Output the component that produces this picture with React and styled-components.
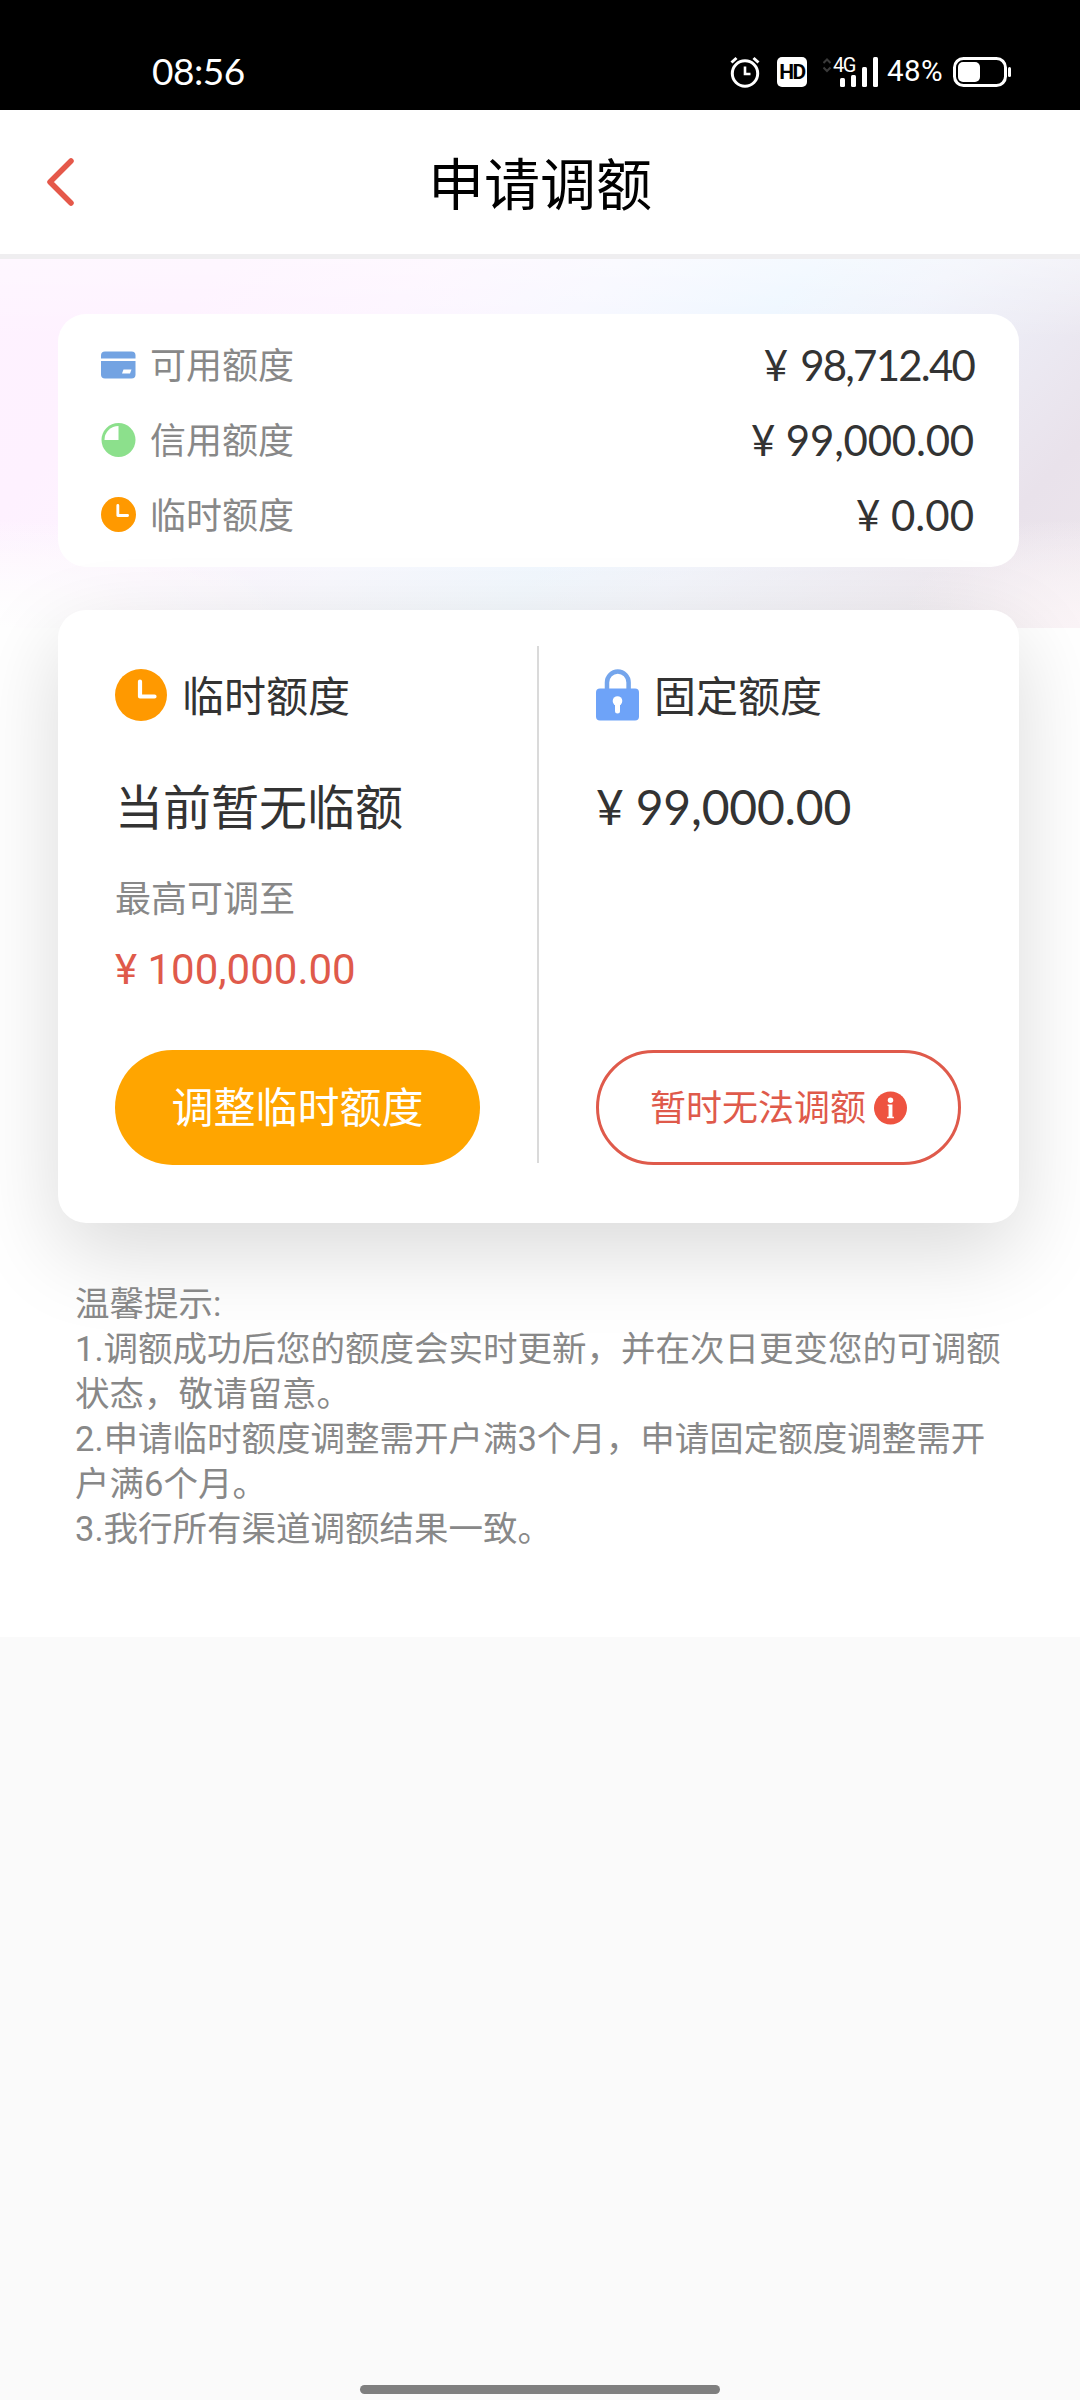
import React from 'react';
import styled, {createGlobalStyle} from 'styled-components';

const GlobalStyle = createGlobalStyle`
    :root {
        --red: #df5a4b;
        --orange: #ffa500;
        --dark: #333333;
        --grey: #888888;
        --cjk: 'Noto Sans CJK SC', sans-serif;
        --digits: Lato, 'Noto Sans CJK SC', sans-serif;
    }

    * {
        box-sizing: border-box;
    }

    body {
        margin: 0;
        background-color: #fafafa;
        font-family: var(--cjk);
    }
`

const Screen = styled.div`
    display: flex;
    flex-direction: column;
    width: 1080px;
    height: 2400px;
    background-color: #fafafa;
    overflow: hidden;

    svg {
        display: block;
        flex: none;
    }
`

const StatusBar = styled.header`
    display: flex;
    align-items: center;
    height: 110px;
    flex: none;
    padding: 34px 68px 0 152px;
    background-color: #000;
    color: #fff;
`

const Time = styled.span`
    flex: 1;
    font-family: var(--digits);
    font-size: 37px;
    line-height: 44px;
    letter-spacing: -0.5px;
    padding-bottom: 2px;
`

const HdBadge = styled.span`
    display: flex;
    align-items: center;
    justify-content: center;
    width: 30px;
    height: 30px;
    margin: 0 16px 0 17px;
    border-radius: 5px;
    background-color: #fff;
    color: #000;
    font-family: Roboto, sans-serif;
    font-size: 21px;
    font-weight: 700;
    letter-spacing: -1.5px;
    line-height: 30px;
`

const Signal = styled.span`
    position: relative;
    display: block;
    width: 56px;
    height: 30px;
`

const Network = styled.span`
    position: absolute;
    left: 10px;
    top: -2px;
    font-family: Roboto, sans-serif;
    font-size: 20px;
    line-height: 20px;
    letter-spacing: -1.5px;
`

const Percent = styled.span`
    width: 57px;
    margin: 0 9px 2px 8px;
    font-family: Roboto, sans-serif;
    font-size: 29.5px;
    line-height: 34px;
    letter-spacing: 0.4px;
    white-space: nowrap;
`

const NavBar = styled.nav`
    display: grid;
    grid-template-columns: 120px 1fr 120px;
    align-items: center;
    flex: none;
    height: 149px;
    padding-bottom: 1px;
    background-color: #fff;
    border-bottom: 5px solid #efeef0;

    svg {
        margin: 1px 0 0 44px;
    }
`

const Title = styled.h1`
    margin: 0 0 1px;
    color: #000;
    font-size: 56px;
    font-weight: 400;
    line-height: 80px;
    text-align: center;
`

const Content = styled.main`
    flex: none;
    height: 1378px;
    padding: 55px 61px 0 58px;
    background:
        radial-gradient(ellipse 300px 110px at 0 369px, #fff 0%, rgba(255, 255, 255, 0) 100%) no-repeat 0 0 / 100% 369px,
        radial-gradient(ellipse 180px 110px at 1080px 369px, #fbf4f7 0%, rgba(251, 244, 247, 0) 100%) no-repeat 0 0 / 100% 369px,
        linear-gradient(180deg, rgba(255, 255, 255, 0.4) 0, rgba(255, 255, 255, 0) 80px) no-repeat 0 0 / 100% 369px,
        linear-gradient(0deg, rgba(250, 250, 250, 0.6) 0, rgba(250, 250, 250, 0) 110px) no-repeat 0 0 / 100% 369px,
        linear-gradient(132deg, #fef2ff 0%, #fef1ff 16%, #fdf4ff 31%, #f7f7ff 44%, #edf6ff 58%, #eff2fb 68%, #ecebf4 77%, #e9e2eb 88%, #ede5ec 100%) no-repeat 0 0 / 100% 369px,
        #fff;
`

const Summary = styled.section`
    display: flex;
    flex-direction: column;
    height: 253px;
    padding: 13px 45px 0 43px;
    border-radius: 28px;
    background-color: #fff;
`

const SummaryRow = styled.div`
    display: flex;
    align-items: center;
    height: 75px;
    color: var(--grey);
    font-size: 36px;
    line-height: 54px;

    span {
        flex: 1;
        margin-left: 14px;
        padding-bottom: 4px;
    }
`

const Amount = styled.strong`
    color: ${props => props.color || 'var(--dark)'};
    font-family: ${props => props.$roboto ? 'Roboto, sans-serif' : 'var(--digits)'};
    font-size: ${props => props.$size || 42}px;
    font-weight: 400;
    line-height: 54px;
    letter-spacing: ${props => props.$spacing || 0}px;
    word-spacing: ${props => props.$gap || 0}px;
    white-space: nowrap;
`

const Limits = styled.section`
    display: grid;
    grid-template-columns: 479px 2px 1fr;
    height: 613px;
    margin-top: 43px;
    padding: 36px 0 58px;
    border-radius: 28px;
    background-color: #fff;
    box-shadow: 0 29px 86px rgba(0, 0, 0, 0.15);
`

const Divider = styled.div`
    height: 517px;
    background-color: #dadada;
`

const Limit = styled.div`
    display: flex;
    flex-direction: column;
    align-items: flex-start;
    padding: 23px 57px 0;
`

const LimitTitle = styled.h2`
    display: flex;
    align-items: center;
    gap: 15px;
    height: 52px;
    margin: 0 0 51px;
    color: var(--dark);
    font-size: 42px;
    font-weight: 400;
    line-height: 60px;

    span {
        padding-bottom: 2px;
    }
`

const LimitValue = styled.div`
    height: 64px;
    margin-bottom: 33px;
    color: var(--dark);
    font-size: 48px;
    line-height: 64px;
`

const Hint = styled.div`
    margin-bottom: 20px;
    color: var(--grey);
    font-size: 36px;
    line-height: 54px;
`

const Button = styled.button`
    display: flex;
    align-items: center;
    justify-content: center;
    gap: 8px;
    width: 365px;
    height: 115px;
    margin-top: auto;
    padding: 0;
    border: ${props => props.$outline ? '3px solid var(--red)' : '0'};
    border-radius: 58px;
    background-color: ${props => props.$outline ? '#fff' : 'var(--orange)'};
    color: ${props => props.$outline ? 'var(--red)' : '#fff'};
    font-family: var(--cjk);
    font-size: ${props => props.$outline ? '36px' : '42px'};
    line-height: 60px;

    span {
        padding-bottom: 5px;
    }
`

const Tips = styled.section`
    margin: 59px -30px 0 17px;
    color: var(--grey);
    font-family: Roboto, 'Noto Sans CJK SC', sans-serif;
    font-size: 34.5px;
    line-height: 45px;

    p {
        margin: 0;
        white-space: nowrap;
    }
`

const HomeBar = styled.div`
    align-self: center;
    width: 360px;
    height: 9px;
    margin: auto 0 6px;
    border-radius: 5px;
    background-color: #7f7f7f;
`

const AlarmIcon = () => (
    <svg width="30" height="32" viewBox="0 0 30 32" fill="none" stroke="#fff" strokeWidth="3">
        <circle cx="15" cy="17.5" r="12.7" />
        <path d="M15 10.5v7.5h5.5" strokeWidth="2.6" />
        <path d="M1.5 6.5 6.5 2M28.5 6.5 23.5 2" />
    </svg>
)

const BatteryIcon = () => (
    <svg width="59" height="30" viewBox="0 0 59 30">
        <rect x="1.5" y="1.5" width="51" height="27" rx="9" fill="none" stroke="#fff" strokeWidth="3" />
        <rect x="5" y="5" width="22" height="20" rx="5" fill="#fff" />
        <rect x="55" y="10" width="3" height="10" rx="1.5" fill="#fff" />
    </svg>
)

const SignalIcon = () => (
    <svg width="56" height="30" viewBox="0 0 56 30" fill="#fff">
        <path d="M0.5 6 4 2.5 7.5 6M0.5 10.5 4 14 7.5 10.5" fill="none" stroke="#3a3a3a" strokeWidth="2" />
        <rect x="17" y="21" width="5" height="9" rx="1.5" />
        <rect x="28" y="18" width="5" height="12" rx="1.5" />
        <rect x="39" y="10" width="5" height="20" rx="1.5" />
        <rect x="50" y="0" width="5" height="30" rx="1.5" />
    </svg>
)

const BackIcon = () => (
    <svg width="32" height="50" viewBox="0 0 32 50" fill="none" stroke="#e5584a" strokeWidth="5.5" strokeLinecap="round" strokeLinejoin="round">
        <path d="M27 4 6 25 27 46" />
    </svg>
)

const CardIcon = () => (
    <svg width="35" height="34" viewBox="0 0 35 34">
        <rect y="3.5" width="34.5" height="27" rx="4" fill="#73a3e2" />
        <rect y="10.5" width="35" height="2.5" fill="#fff" />
        <path d="M22.5 21.5h8l-1.5 4h-8z" fill="#fff" />
    </svg>
)

const PieIcon = () => (
    <svg width="35" height="34" viewBox="0 0 34 34">
        <circle cx="17" cy="17" r="17" fill="#8ce08c" />
        <path d="M17 17V3A14 14 0 0 0 3 17z" fill="#fff" />
    </svg>
)

const ClockIcon = ({size = 35}) => (
    <svg width={size} height={size} viewBox="0 0 52 52">
        <circle cx="26" cy="26" r="26" fill="#ff9900" />
        <path d="M25 12.5V27.5H39.5" fill="none" stroke="#fff" strokeWidth="4.2" strokeLinecap="round" strokeLinejoin="round" />
    </svg>
)

const LockIcon = () => (
    <svg width="43" height="52" viewBox="0 0 43 52">
        <path d="M11 22V13.5a10.8 11 0 0 1 21.6 0V22" fill="none" stroke="#74a5ec" strokeWidth="4.5" />
        <rect y="19.5" width="43" height="32" rx="4" fill="#6ea3f8" />
        <circle cx="21.5" cy="32" r="4.8" fill="#fff" />
        <rect x="19" y="32" width="5" height="12.5" rx="2.5" fill="#fff" />
    </svg>
)

const InfoIcon = () => (
    <svg width="33" height="34" viewBox="0 0 34 34">
        <circle cx="17" cy="17" r="17" fill="#ee5340" />
        <circle cx="17" cy="9" r="2.8" fill="#fff" />
        <path d="M14 13.5h5v12.5h1.5v1.5h-7v-1.5h1.5v-11h-1z" fill="#fff" />
    </svg>
)

const App = () => (
    <Screen>
        <GlobalStyle />
        <StatusBar>
            <Time>08:56</Time>
            <AlarmIcon />
            <HdBadge>HD</HdBadge>
            <Signal>
                <SignalIcon />
                <Network>4G</Network>
            </Signal>
            <Percent>48%</Percent>
            <BatteryIcon />
        </StatusBar>
        <NavBar>
            <BackIcon />
            <Title>申请调额</Title>
        </NavBar>
        <Content>
            <Summary>
                <SummaryRow>
                    <CardIcon />
                    <span>可用额度</span>
                    <Amount $spacing={-1.8} $gap={5}>¥ 98,712.40</Amount>
                </SummaryRow>
                <SummaryRow>
                    <PieIcon />
                    <span>信用额度</span>
                    <Amount $spacing={-0.2}>¥ 99,000.00</Amount>
                </SummaryRow>
                <SummaryRow>
                    <ClockIcon />
                    <span>临时额度</span>
                    <Amount>¥ 0.00</Amount>
                </SummaryRow>
            </Summary>
            <Limits>
                <Limit>
                    <LimitTitle><ClockIcon size={52} /><span>临时额度</span></LimitTitle>
                    <LimitValue>当前暂无临额</LimitValue>
                    <Hint>最高可调至</Hint>
                    <Amount $roboto color="var(--red)">¥ 100,000.00</Amount>
                    <Button><span>调整临时额度</span></Button>
                </Limit>
                <Divider />
                <Limit>
                    <LimitTitle><LockIcon /><span>固定额度</span></LimitTitle>
                    <LimitValue><Amount $size={48} $spacing={-0.2}>¥ 99,000.00</Amount></LimitValue>
                    <Button $outline><span>暂时无法调额</span><InfoIcon /></Button>
                </Limit>
            </Limits>
            <Tips>
                <p>温馨提示:</p>
                <p>1.调额成功后您的额度会实时更新，并在次日更变您的可调额</p>
                <p>状态，敬请留意。</p>
                <p>2.申请临时额度调整需开户满3个月，申请固定额度调整需开</p>
                <p>户满6个月。</p>
                <p>3.我行所有渠道调额结果一致。</p>
            </Tips>
        </Content>
        <HomeBar />
    </Screen>
)

export default App;
